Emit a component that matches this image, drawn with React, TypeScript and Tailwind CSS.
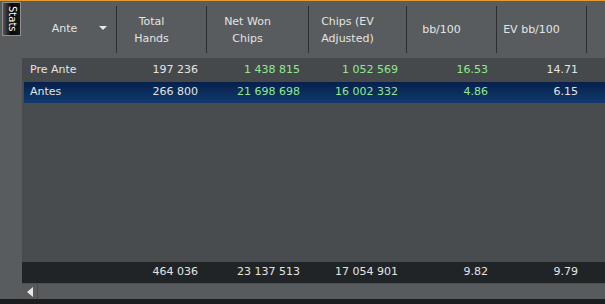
import React from "react";

type Row = {
  name: string;
  hands: string;
  won: string;
  ev: string;
  bb: string;
  evbb: string;
  selected?: boolean;
};

const rows: Row[] = [
  { name: "Pre Ante", hands: "197 236", won: "1 438 815", ev: "1 052 569", bb: "16.53", evbb: "14.71" },
  { name: "Antes", hands: "266 800", won: "21 698 698", ev: "16 002 332", bb: "4.86", evbb: "6.15", selected: true },
];

const widths = ["w-[95px]", "w-[90px]", "w-[102px]", "w-[98px]", "w-[90px]", "w-[90px]"];

function HeaderCell({ w, children }: { w: string; children: React.ReactNode }) {
  return (
    <div className={`${w} flex shrink-0`}>
      <div className="flex-1 flex items-center justify-center pr-[20px] text-center leading-[17px]">
        {children}
      </div>
      <div className="w-px my-[5px] bg-[#2c2f31]" />
    </div>
  );
}

function Num({ w, green, children }: { w: string; green?: boolean; children: React.ReactNode }) {
  return (
    <div className={`${w} shrink-0 text-right pr-[9px] ${green ? "text-[#8fea8f]" : "text-[#e4e4e4]"}`}>
      {children}
    </div>
  );
}

export default function App() {
  return (
    <div className="w-[605px] h-[304px] flex flex-col overflow-hidden bg-[#585c5f] text-[11px] text-[#e4e4e4] font-['DejaVu_Sans',sans-serif]">
      <div className="h-px bg-[#e49b2f]" />
      <div className="flex flex-1 min-h-0">
        {/* side tab */}
        <div className="w-[22px] shrink-0 pt-[1px] pl-[2px]">
          <div className="w-[19px] h-[34px] border border-[#8d9093] bg-gradient-to-r from-[#555] via-[#080808] to-[#151515] flex items-center justify-center">
            <span className="[writing-mode:vertical-rl] text-white text-[10px] leading-none">Stats</span>
          </div>
        </div>

        <div className="flex-1 flex flex-col min-w-0">
          {/* header */}
          <div className="h-[57px] flex shrink-0">
            <div className="w-[95px] flex shrink-0">
              <div className="flex-1 flex items-center pl-[8px]">
                <span className="flex-1 text-center">Ante</span>
                <svg width="8" height="5" viewBox="0 0 8 5" className="mr-[9px] mb-[2px]">
                  <path d="M0 0 H8 L4 4 Z" fill="#e8e8e8" />
                </svg>
              </div>
              <div className="w-px my-[5px] bg-[#2c2f31]" />
            </div>
            <HeaderCell w="w-[90px]">Total<br />Hands</HeaderCell>
            <HeaderCell w="w-[102px]">Net Won<br />Chips</HeaderCell>
            <HeaderCell w="w-[98px]">Chips (EV<br />Adjusted)</HeaderCell>
            <HeaderCell w="w-[90px]">bb/100</HeaderCell>
            <HeaderCell w="w-[90px]">EV bb/100</HeaderCell>
          </div>

          {/* body */}
          <div className="flex-1 flex flex-col bg-[#484c4f]">
            {rows.map((r) =>
              <div
                key={r.name}
                className={
                  r.selected
                    ? "h-[21px] ml-[2px] flex items-center bg-gradient-to-b from-[#07204c] to-[#113b6c]"
                    : "h-[24px] flex items-center bg-[#45494c]"
                }
              >
                <div className={r.selected ? "w-[93px] shrink-0 pl-[6px]" : "w-[95px] shrink-0 pl-[8px]"}>
                  {r.name}
                </div>
                <Num w={widths[1]}>{r.hands}</Num>
                <Num w={widths[2]} green>{r.won}</Num>
                <Num w={widths[3]} green>{r.ev}</Num>
                <Num w={widths[4]} green>{r.bb}</Num>
                <Num w={widths[5]}>{r.evbb}</Num>
              </div>
            )}
            <div className="flex-1" />
          </div>

          {/* totals */}
          <div className="h-[21px] shrink-0 flex items-center bg-[#212427]">
            <div className="w-[95px] shrink-0" />
            <Num w={widths[1]}>464 036</Num>
            <Num w={widths[2]}>23 137 513</Num>
            <Num w={widths[3]}>17 054 901</Num>
            <Num w={widths[4]}>9.82</Num>
            <Num w={widths[5]}>9.79</Num>
          </div>
          <div className="h-px shrink-0 bg-[#4a4e51]" />

          {/* scrollbar */}
          <div className="h-[15px] shrink-0 flex bg-[#575b5e]">
            <div className="w-[16px] flex items-center justify-center border-r border-[#45494c]">
              <svg width="6" height="10" viewBox="0 0 6 10">
                <path d="M6 0 V10 L0 5 Z" fill="#e8e8e8" />
              </svg>
            </div>
            <div className="flex-1" />
          </div>
        </div>
      </div>
      <div className="h-[5px] bg-[#1b1d1f]" />
    </div>
  );
}
